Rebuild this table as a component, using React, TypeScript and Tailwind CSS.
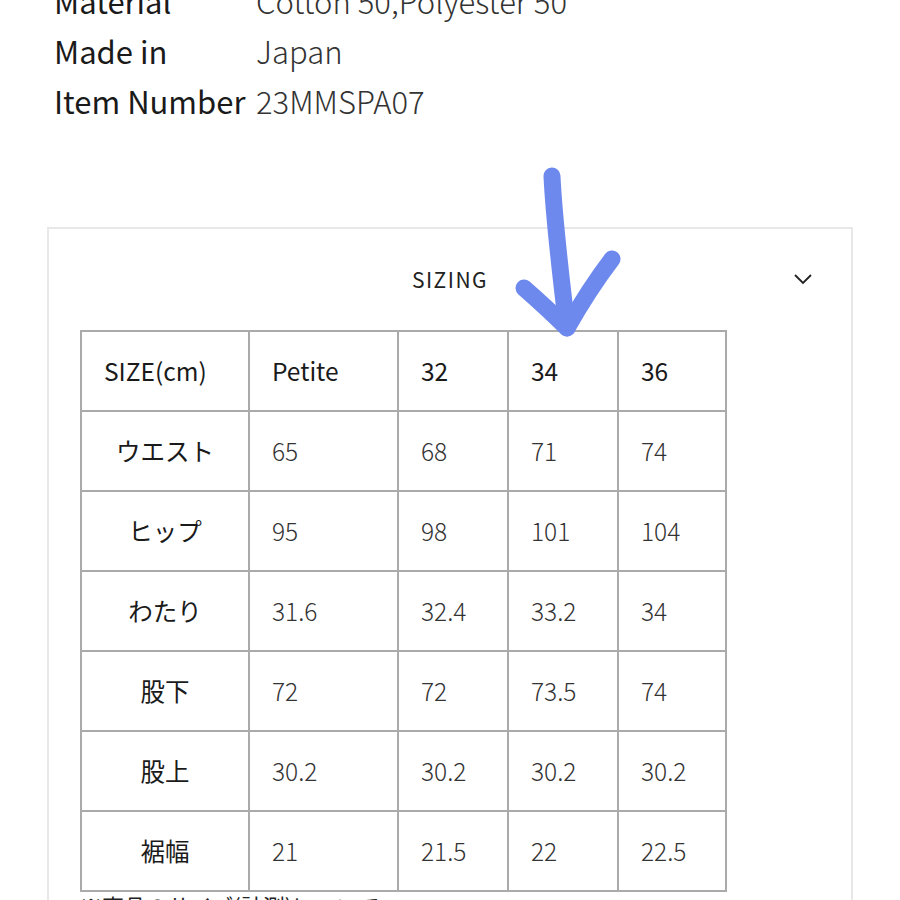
import React from "react";

const font = { fontFamily: '"Noto Sans CJK JP", "Noto Sans", sans-serif' };

const rows: [string, string[]][] = [
  ["ウエスト", ["65", "68", "71", "74"]],
  ["ヒップ", ["95", "98", "101", "104"]],
  ["わたり", ["31.6", "32.4", "33.2", "34"]],
  ["股下", ["72", "72", "73.5", "74"]],
  ["股上", ["30.2", "30.2", "30.2", "30.2"]],
  ["裾幅", ["21", "21.5", "22", "22.5"]],
];

export default function App() {
  return (
    <div className="relative w-[900px] h-[900px] overflow-hidden bg-white text-[#1a1a1a]" style={font}>
      <div className="mt-[-24px] pl-[54px]">
        {[
          ["Material", "Cotton 50,Polyester 50"],
          ["Made in", "Japan"],
          ["Item Number", "23MMSPA07"],
        ].map(([k, v]) => (
          <div key={k} className="flex h-[50px] items-center text-[31px]">
            <div className="w-[202px] shrink-0 whitespace-nowrap text-[#1a1a1a]">{k}</div>
            <div className="font-light text-[#333]">{v}</div>
          </div>
        ))}
      </div>

      <div className="ml-[47px] mt-[101px] w-[806px] border-2 border-[#e8e8e8] pb-[10px]">
        <div className="relative flex h-[101px] items-center justify-center">
          <div className="text-[21px] tracking-[1.5px] text-[#222]">SIZING</div>
          <svg className="absolute right-[38px] top-[42px]" width="20" height="14" viewBox="0 0 20 14">
            <path d="M2 4 L10 12 L18 4" fill="none" stroke="#222" strokeWidth="1.8" />
          </svg>
        </div>
        <div className="pl-[31px]">
          <table className="border-collapse text-[24.5px]" style={{ width: 647 }}>
            <colgroup>
              <col style={{ width: 168 }} />
              <col style={{ width: 149 }} />
              <col style={{ width: 110 }} />
              <col style={{ width: 110 }} />
              <col style={{ width: 108 }} />
            </colgroup>
            <tbody>
              <tr className="h-[80px]">
                <td className="border-2 border-[#aaaaaa] pl-[22px] text-left">SIZE(cm)</td>
                {["Petite", "32", "34", "36"].map((h) => (
                  <td key={h} className="border-2 border-[#aaaaaa] pl-[22px]">{h}</td>
                ))}
              </tr>
              {rows.map(([label, vals]) => (
                <tr key={label} className="h-[80px]">
                  <td className="border-2 border-[#aaaaaa] text-center">{label}</td>
                  {vals.map((v, i) => (
                    <td key={i} className="border-2 border-[#aaaaaa] pl-[22px] font-light text-[#333]">{v}</td>
                  ))}
                </tr>
              ))}
            </tbody>
          </table>
          <div className="mt-[-2px] text-[22px] leading-[30px] text-[#222]">※商品のサイズ(計測)について</div>
        </div>
      </div>

      <svg className="absolute left-0 top-0 pointer-events-none" width="900" height="900" viewBox="0 0 900 900">
        <g fill="none" stroke="#6a86ee" strokeWidth="17" strokeLinecap="round" strokeLinejoin="round" opacity="0.97">
          <path d="M552 176 C554 220 560 270 567 328" />
          <path d="M524 288 C540 302 555 316 567 328 C580 305 596 280 612 259" />
        </g>
      </svg>
    </div>
  );
}
